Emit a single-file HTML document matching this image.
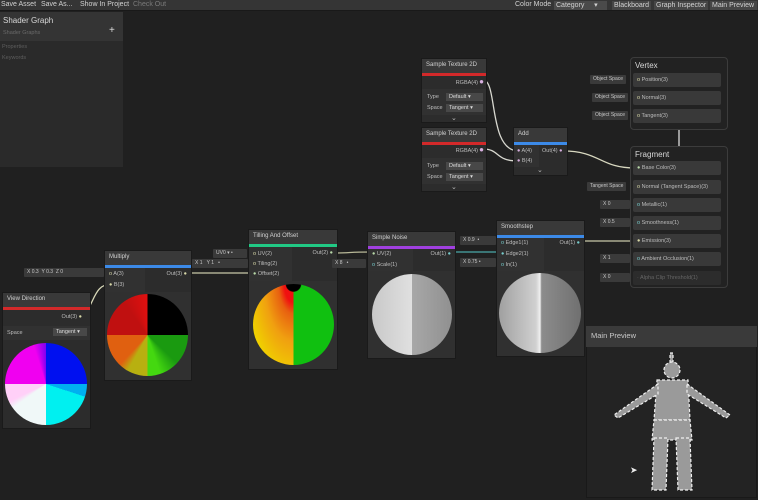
<!DOCTYPE html><html><head><meta charset="utf-8"><style>
*{margin:0;padding:0;box-sizing:border-box}
body{width:758px;height:500px;background:#202020;font-family:"Liberation Sans",sans-serif;color:#c4c4c4;position:relative;overflow:hidden;font-size:6px}
.a{position:absolute}
.tb{left:0;top:0;width:758px;height:11px;background:#353535;border-bottom:1px solid #191919;font-size:7px;color:#d2d2d2}
.tb span{position:absolute;top:1px;white-space:nowrap}
.btn{background:#464646;padding:0 2px;height:9px;top:1px!important;line-height:9px}
.node{position:absolute;background:#2c2c2c;border:1px solid #1a1a1a}
.hd{height:14px;background:#393939;font-size:6px;padding:3px 4px;color:#d0d0d0}
.bar{height:3px}
.t{position:absolute;font-size:5.5px;color:#bdbdbd;white-space:nowrap}
.pb{position:absolute;background:#393939;height:14px;border-radius:2px}
.lab{position:absolute;background:#3a3a3a;height:9px;font-size:5px;color:#c8c8c8;padding:1px 3px;border-radius:1px;white-space:nowrap}
.sph{position:absolute;border-radius:50%}
.dd{position:absolute;background:#484848;height:8px;font-size:5.5px;padding:1px 3px;color:#ddd}
</style></head><body>
<div class="a tb">
<span style="left:1px">Save Asset</span><span style="left:41px">Save As...</span><span style="left:80px">Show In Project</span><span style="left:133px;color:#7a7a7a">Check Out</span>
<span style="left:515px">Color Mode</span><span class="btn" style="left:554px;width:53px;background:#4a4a4a">Category &nbsp; &nbsp; ▾</span>
<span class="btn" style="left:612px">Blackboard</span><span class="btn" style="left:654px">Graph Inspector</span><span class="btn" style="left:710px;width:47px">Main Preview</span>
</div>
<!-- blackboard -->
<div class="a" style="left:0;top:12px;width:123px;height:155px;background:#2a2a2a"></div>
<div class="a" style="left:0;top:12px;width:123px;height:29px;background:#343434"></div>
<div class="a t" style="left:3px;top:16px;font-size:8px;color:#d8d8d8">Shader Graph</div>
<div class="a t" style="left:3px;top:30px;color:#6a6a6a">Shader Graphs</div>
<div class="a t" style="left:109px;top:25px;font-size:10px;color:#ddd">+</div>
<div class="a t" style="left:2px;top:44px;color:#5e5e5e">Properties</div>
<div class="a t" style="left:2px;top:55px;color:#5e5e5e">Keywords</div>

<svg class="a" style="left:0;top:0" width="758" height="500" fill="none" stroke-width="1.3">
<path d="M483 80 C498 80 488 150 518 151" stroke="#d8d8d0"/>
<path d="M483 149 C500 149 495 161 518 161" stroke="#d8d8d0"/>
<path d="M563 151 C600 151 600 168 635 168" stroke="#d8d8c0"/>
<path d="M679 130 L679 146" stroke="#ddd"/>
<path d="M76 316 C95 316 90 284 111 284" stroke="#d8d8b8"/>
<path d="M186 273 C220 273 220 273 253 273" stroke="#c8c8a8"/>
<path d="M332 253 C355 253 345 252 372 252" stroke="#b8b898"/>
<path d="M450 252 L501 252" stroke="#4aa8a8"/>
<path d="M579 241 L636 241" stroke="#c8c8a8"/>
</svg>

<!-- Sample Texture 2D 1 -->
<div class="node" style="left:421px;top:58px;width:66px;height:65px">
<div class="hd">Sample Texture 2D</div><div class="bar" style="background:#d3292a"></div>
<div class="t" style="right:8px;top:21px">RGBA(4)</div><div class="t" style="right:2px;top:18px;color:#d8b0e0;font-size:8px">●</div>
<div class="a" style="left:0;top:30px;width:64px;height:26px;background:#313131"></div>
<div class="t" style="left:5px;top:35px">Type</div><div class="dd" style="left:24px;top:34px;width:37px">Default ▾</div>
<div class="t" style="left:5px;top:46px">Space</div><div class="dd" style="left:24px;top:45px;width:37px">Tangent ▾</div>
<div class="t" style="left:29px;top:55px;font-size:7px">⌄</div>
</div>
<div class="node" style="left:421px;top:127px;width:66px;height:65px">
<div class="hd">Sample Texture 2D</div><div class="bar" style="background:#d3292a"></div>
<div class="t" style="right:8px;top:20px">RGBA(4)</div><div class="t" style="right:2px;top:17px;color:#d8b0e0;font-size:8px">●</div>
<div class="a" style="left:0;top:30px;width:64px;height:26px;background:#313131"></div>
<div class="t" style="left:5px;top:35px">Type</div><div class="dd" style="left:24px;top:34px;width:37px">Default ▾</div>
<div class="t" style="left:5px;top:46px">Space</div><div class="dd" style="left:24px;top:45px;width:37px">Tangent ▾</div>
<div class="t" style="left:29px;top:55px;font-size:7px">⌄</div>
</div>
<!-- Add -->
<div class="node" style="left:513px;top:127px;width:55px;height:49px">
<div class="hd">Add</div><div class="bar" style="background:#3c8ae8"></div>
<div class="a" style="left:0;top:17px;width:25px;height:22px;background:#313131"></div>
<div class="t" style="left:3px;top:20px"><span style="color:#d8b0e0">●</span> A(4)</div>
<div class="t" style="left:3px;top:30px"><span style="color:#d8b0e0">●</span> B(4)</div>
<div class="t" style="left:28px;top:20px">Out(4) <span style="color:#d8b0e0">●</span></div>
<div class="t" style="left:23px;top:38px;font-size:7px">⌄</div>
</div>
<!-- Vertex -->
<div class="a" style="left:630px;top:57px;width:98px;height:73px;border:1px solid #3c3c3c;border-radius:4px;background:#222"></div>
<div class="a t" style="left:635px;top:61px;font-size:8px;color:#d8d8d8">Vertex</div>
<div class="pb" style="left:633px;top:73px;width:88px"></div><div class="t" style="left:637px;top:77px"><span style="color:#d8d8a8">o</span> Position(3)</div>
<div class="pb" style="left:633px;top:91px;width:88px"></div><div class="t" style="left:637px;top:95px"><span style="color:#d8d8a8">o</span> Normal(3)</div>
<div class="pb" style="left:633px;top:109px;width:88px"></div><div class="t" style="left:637px;top:113px"><span style="color:#d8d8a8">o</span> Tangent(3)</div>
<div class="lab" style="left:590px;top:75px">Object Space</div><div class="lab" style="left:592px;top:93px">Object Space</div><div class="lab" style="left:592px;top:111px">Object Space</div>
<!-- Fragment -->
<div class="a" style="left:630px;top:146px;width:98px;height:142px;border:1px solid #3c3c3c;border-radius:4px;background:#222"></div>
<div class="a t" style="left:635px;top:150px;font-size:8px;color:#d8d8d8">Fragment</div>
<div class="pb" style="left:633px;top:161px;width:88px"></div><div class="t" style="left:637px;top:165px"><span style="color:#b8d8a8">●</span> Base Color(3)</div>
<div class="pb" style="left:633px;top:180px;width:88px"></div><div class="t" style="left:637px;top:184px"><span style="color:#d8d8a8">o</span> Normal (Tangent Space)(3)</div>
<div class="pb" style="left:633px;top:198px;width:88px"></div><div class="t" style="left:637px;top:202px"><span style="color:#7cc">o</span> Metallic(1)</div>
<div class="pb" style="left:633px;top:216px;width:88px"></div><div class="t" style="left:637px;top:220px"><span style="color:#7cc">o</span> Smoothness(1)</div>
<div class="pb" style="left:633px;top:234px;width:88px"></div><div class="t" style="left:637px;top:238px"><span style="color:#d8d8a8">●</span> Emission(3)</div>
<div class="pb" style="left:633px;top:252px;width:88px"></div><div class="t" style="left:637px;top:256px"><span style="color:#7cc">o</span> Ambient Occlusion(1)</div>
<div class="pb" style="left:633px;top:271px;width:88px;background:#2c2c2c"></div><div class="t" style="left:637px;top:275px;color:#666">· Alpha Clip Threshold(1)</div>
<div class="lab" style="left:587px;top:182px">Tangent Space</div>
<div class="lab" style="left:600px;top:200px;width:30px">X 0</div>
<div class="lab" style="left:600px;top:218px;width:30px">X 0.5</div>
<div class="lab" style="left:600px;top:254px;width:30px">X 1</div>
<div class="lab" style="left:600px;top:273px;width:30px">X 0</div>

<!-- Multiply -->
<div class="node" style="left:104px;top:250px;width:88px;height:131px">
<div class="hd">Multiply</div><div class="bar" style="background:#3c8ae8"></div>
<div class="a" style="left:0;top:17px;width:40px;height:24px;background:#313131"></div>
<div class="t" style="left:4px;top:20px"><span style="color:#d8d8a8">o</span> A(3)</div>
<div class="t" style="left:4px;top:31px"><span style="color:#d8d8a8">●</span> B(3)</div>
<div class="t" style="right:4px;top:20px">Out(3) <span style="color:#d8d8a8">●</span></div>
<div class="a" style="left:0;top:41px;width:86px;height:88px;background:#303030"></div>
</div>
<div class="sph" style="left:107px;top:294px;width:81px;height:82px;background:conic-gradient(#000 0 25%,#1a9a10 25% 37%,#44d810 45% 50%,#b8b010 50% 58%,#e06010 62% 75%,#c01010 75% 90%,#e01010 100%)"></div>
<div class="lab" style="left:24px;top:268px;width:80px">X 0.3 &nbsp;Y 0.3 &nbsp;Z 0</div>
<!-- View direction -->
<div class="node" style="left:2px;top:292px;width:89px;height:137px">
<div class="hd">View Direction</div><div class="bar" style="background:#d3292a"></div>
<div class="t" style="right:8px;top:21px">Out(3) <span style="color:#d8d8a8">●</span></div>
<div class="a" style="left:0;top:33px;width:87px;height:14px;background:#313131"></div>
<div class="t" style="left:4px;top:37px">Space</div><div class="dd" style="left:50px;top:35px;width:34px">Tangent ▾</div>
</div>
<div class="sph" style="left:5px;top:343px;width:82px;height:82px;background:conic-gradient(#0010f0 0 25%,#00b0f0 25% 30%,#00f0f0 30% 50%,#f0f8f8 50% 65%,#ffd0f8 68% 75%,#f000f0 75% 95%,#8000f0 100%)"></div>
<!-- Tilling -->
<div class="node" style="left:248px;top:229px;width:90px;height:141px">
<div class="hd">Tilling And Offset</div><div class="bar" style="background:#21c985"></div>
<div class="a" style="left:0;top:17px;width:43px;height:34px;background:#313131"></div>
<div class="t" style="left:4px;top:21px"><span style="color:#d8d8a8">o</span> UV(2)</div>
<div class="t" style="left:4px;top:31px"><span style="color:#d8d8a8">o</span> Tiling(2)</div>
<div class="t" style="left:4px;top:41px"><span style="color:#b8d8a8">●</span> Offset(2)</div>
<div class="t" style="right:4px;top:20px">Out(2) <span style="color:#b8d8a8">●</span></div>
<div class="a" style="left:0;top:51px;width:88px;height:88px;background:#303030"></div>
</div>
<div class="sph" style="left:253px;top:284px;width:81px;height:81px;background:radial-gradient(circle at 50% 0%,#000 0 8%,transparent 9%),linear-gradient(90deg,transparent 50%,#10c010 50%),radial-gradient(ellipse at 50% 0%,#f01010 0 16%,#e86010 26%,#f0a010 50%,#f0d000 80%,#f8f000 100%)"></div>
<div class="lab" style="left:213px;top:249px;width:34px">UV0 ▾ •</div>
<div class="lab" style="left:192px;top:259px;width:56px">X 1 &nbsp; Y 1 &nbsp; •</div>
<!-- Simple noise -->
<div class="node" style="left:367px;top:231px;width:89px;height:128px">
<div class="hd">Simple Noise</div><div class="bar" style="background:#a040e0"></div>
<div class="a" style="left:0;top:17px;width:45px;height:22px;background:#313131"></div>
<div class="t" style="left:4px;top:19px"><span style="color:#b8d8a8">●</span> UV(2)</div>
<div class="t" style="left:4px;top:30px"><span style="color:#7cc">o</span> Scale(1)</div>
<div class="t" style="right:4px;top:19px">Out(1) <span style="color:#7cc">●</span></div>
<div class="a" style="left:0;top:39px;width:87px;height:87px;background:#303030"></div>
</div>
<div class="sph" style="left:372px;top:274px;width:80px;height:81px;background:linear-gradient(90deg,#c8c8c8,#e0e0e0 50%,#a8a8a8 50%,#909090)"></div>
<div class="lab" style="left:332px;top:259px;width:34px">X 8 &nbsp; •</div>
<!-- Smoothstep -->
<div class="node" style="left:496px;top:220px;width:89px;height:137px">
<div class="hd">Smoothstep</div><div class="bar" style="background:#3c8ae8"></div>
<div class="a" style="left:0;top:17px;width:47px;height:33px;background:#313131"></div>
<div class="t" style="left:4px;top:19px"><span style="color:#7cc">o</span> Edge1(1)</div>
<div class="t" style="left:4px;top:30px"><span style="color:#7cc">●</span> Edge2(1)</div>
<div class="t" style="left:4px;top:41px"><span style="color:#7cc">o</span> In(1)</div>
<div class="t" style="right:4px;top:19px">Out(1) <span style="color:#7cc">●</span></div>
<div class="a" style="left:0;top:50px;width:87px;height:85px;background:#303030"></div>
</div>
<div class="sph" style="left:499px;top:273px;width:82px;height:80px;background:linear-gradient(90deg,#a0a0a0,#d0d0d0 45%,#f0f0f0 50%,#8c8c8c 52%,#707070)"></div>
<div class="lab" style="left:460px;top:236px;width:36px">X 0.9 &nbsp;•</div>
<div class="lab" style="left:460px;top:258px;width:36px">X 0.75 •</div>

<!-- Main preview -->
<div class="a" style="left:586px;top:326px;width:171px;height:172px;background:#232323;border:1px solid #191919"></div>
<div class="a" style="left:586px;top:326px;width:171px;height:21px;background:#3a3a3a"></div>
<div class="a t" style="left:591px;top:331px;font-size:7.5px;color:#c8c8c8">Main Preview</div>
<svg class="a" style="left:610px;top:350px" width="130" height="145">
<g fill="#9a9a9a" stroke="#f0f0f0" stroke-width="1.2" stroke-dasharray="3 2">
<rect x="60" y="3" width="3" height="12"/>
<ellipse cx="62" cy="20" rx="8" ry="8"/>
<path d="M47 30 L78 30 L80 70 L44 70 Z"/>
<path d="M48 34 L4 65 L8 68 L48 44 Z"/>
<path d="M77 34 L120 65 L116 68 L77 44 Z"/>
<path d="M44 70 L80 70 L82 90 L42 90 Z"/>
<path d="M44 88 L58 88 L56 140 L42 140 Z"/>
<path d="M66 88 L80 88 L82 140 L68 140 Z"/>
</g></svg>
<div class="a t" style="left:630px;top:465px;font-size:9px;color:#eee">➤</div>
</body></html>
